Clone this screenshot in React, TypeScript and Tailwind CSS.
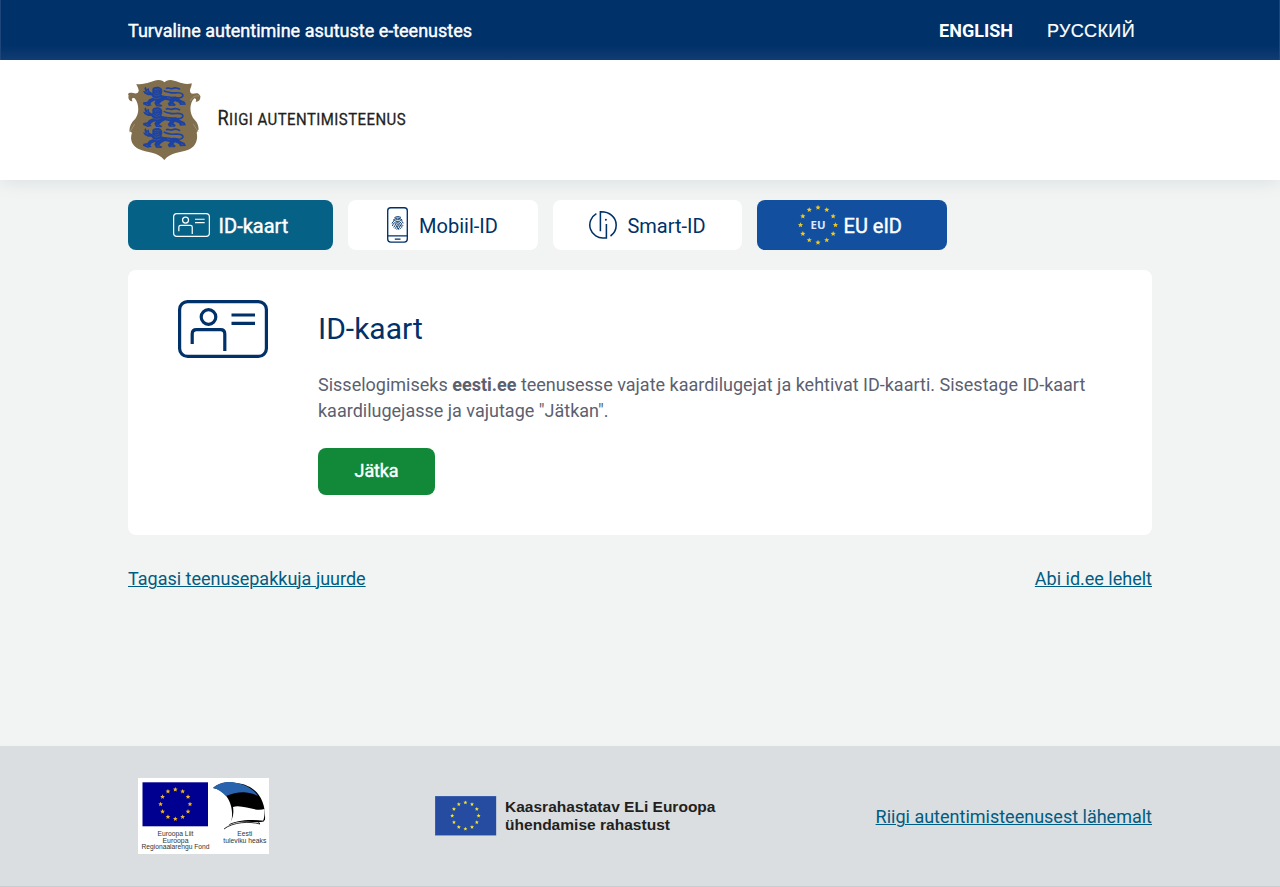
import React from "react";

function star(cx: number, cy: number, r: number) {
  return Array.from({ length: 10 }, (_, i) => {
    const a = (Math.PI * i) / 5 - Math.PI / 2;
    const q = i % 2 ? r * 0.45 : r;
    return `${(cx + q * Math.cos(a)).toFixed(2)},${(cy + q * Math.sin(a)).toFixed(2)}`;
  }).join(" ");
}

function Stars({ cx, cy, radius, size, fill }: { cx: number; cy: number; radius: number; size: number; fill: string }) {
  return (
    <g fill={fill}>
      {Array.from({ length: 12 }, (_, i) => {
        const a = (Math.PI * i) / 6;
        return <polygon key={i} points={star(cx + radius * Math.sin(a), cy - radius * Math.cos(a), size)} />;
      })}
    </g>
  );
}

function Lion({ y }: { y: number }) {
  return (
    <g transform={`translate(0 ${y})`}>
      <path fill="#1c43a3" d="M97 8 C99 0 119 -2 124 6 C129 12 127 20 124 26 C134 31 145 28 156 31 C168 29 176 34 181 40 L194 46 L198 55 L180 56 L177 49 L165 44 L160 49 L167 54 L165 59 L147 59 L143 52 L150 43 L135 40 L124 46 L118 53 L127 57 L124 61 L108 60 L103 50 L107 42 L95 47 L91 54 L96 57 L83 60 L69 54 L70 48 L82 46 L87 39 L99 34 L94 27 L84 27 L74 22 L69 14 L76 15 L73 6 L77 1 L80 9 L86 5 L88 15 L97 20 Z" />
      <path d="M165 33 C181 38 193 31 187 23 C180 15 164 22 151 19 C139 16 134 17 132 12 M138 7 C145 1 149 9 156 7 C162 4 170 3 180 9" fill="none" stroke="#1c43a3" strokeWidth="5" />
      <path d="M160 36 L175 42 L188 51 M147 38 L158 42 L153 55 M108 36 L120 40 L111 52" fill="none" stroke="#1c43a3" strokeWidth="7" />
      <g fill="none" stroke="#806e4c" strokeWidth="1.1">
        <path d="M103 8 L109 10 L115 7 L119 11 M104 14 L108 14 M112 14 L116 14 M105 19 L110 22 L117 19 M100 23 L109 29 L120 25 M92 32 L109 37 L122 34" />
        <path d="M76 16 L85 20 M82 11 L83 17 M112 54 L118 57 M78 52 L84 55 M153 54 L159 57 M184 49 L190 52 M141 33 L151 37" />
      </g>
    </g>
  );
}

function Shield() {
  return (
    <svg className="h-20 w-[73px] shrink-0" viewBox="24 30 219 240" aria-hidden="true">
      <path fill="#806e4c" d="M24 72 C32 61 51 80 56 63 C57 56 51 50 49 42 C75 46 98 31 115 30 C126 30 130 33 133 37 C137 33 142 30 151 30 C169 31 190 47 215 40 C216 51 207 57 211 67 C218 79 232 60 241 78 C242 88 237 97 227 95 C230 90 228 85 223 85 C208 98 206 132 225 151 C232 158 235 167 236 178 L230 188 C235 210 226 232 205 239 C181 248 153 245 133 270 C112 244 81 249 56 237 C35 226 29 207 36 188 L28 184 C28 169 34 156 46 146 C58 130 58 102 44 85 C35 82 34 89 38 94 C28 95 23 84 26 77 Z" />
      <path d="M238 78 C223 76 216 82 211 93 M29 187 L44 162 M235 186 L220 162" fill="none" stroke="#bbb09b" strokeWidth="1.5" />
      <Lion y={49} />
      <Lion y={111} />
      <Lion y={173} />
    </svg>
  );
}

function IdCard({ className, stroke }: { className: string; stroke: number }) {
  return (
    <svg className={className} viewBox="0 0 90 58" fill="none" stroke="currentColor" strokeWidth={stroke} aria-hidden="true">
      <rect x={stroke / 2} y={stroke / 2} width={90 - stroke} height={58 - stroke} rx="8" />
      <circle cx="30.5" cy="17" r="7.3" />
      <path d="M14.2 44 V34 Q14.2 29.7 18.5 29.7 H42.5 Q46.8 29.7 46.8 34 V51 M53.5 15 H77 M53.5 23.3 H77" />
    </svg>
  );
}

function Phone() {
  return (
    <svg className="h-9 w-[21px]" viewBox="0 0 21 36" fill="none" stroke="#003168" aria-hidden="true">
      <rect x="0.7" y="0.7" width="19.6" height="34.4" rx="3" strokeWidth="1.35" />
      <path d="M0.7 28.8 H20.3 M7.8 32 H13.5" strokeWidth="1.25" />
      <g strokeWidth="0.95">
        <path d="M7.5 10.5 Q10.7 8.5 14 10.4 M6 13.3 Q10.7 8.8 15.4 13.2 M5 16.6 C6.6 11.4 14.8 11.2 16.2 16.4 M5.4 19 C6.8 13.7 13.7 12.7 14.7 17.5 C15 19.4 15.8 19.3 16.2 18.5" />
        <path d="M6.7 20.5 C9 17.7 8 15.6 10.7 15.6 C13.7 15.6 12.8 20 15.2 20.6 M8 21.8 C10.3 19.5 9.2 17.1 10.7 17.1 C12.2 17.1 11.8 20.3 13.6 21.9 M10.8 18.6 Q10.8 21 9.8 22.6 M11.3 20.8 L11.9 22.8" />
      </g>
    </svg>
  );
}

function SmartId() {
  return (
    <svg className="h-7 w-7" viewBox="0 0 28 28" fill="none" stroke="#003168" strokeWidth="1.55" aria-hidden="true">
      <path d="M7.4 2.6 A13.1 13.1 0 0 0 15.3 27 H17.4 V13 M11.4 20.2 V0.8 C20.5 0.5 27.2 6.2 27.2 14 C27.2 18.3 25.2 22.4 21.5 25" />
      <circle cx="16.9" cy="8.7" r="1" fill="#003168" stroke="none" />
    </svg>
  );
}

function EuBadge() {
  return (
    <svg className="h-10 w-10" viewBox="0 0 40 40" aria-hidden="true">
      <Stars cx={20} cy={20} radius={17.5} size={2.7} fill="#f2c81e" />
      <text x="20" y="23.9" textAnchor="middle" textLength="15" lengthAdjust="spacingAndGlyphs" fill="#dce8ff" fontFamily="Open Sans, sans-serif" fontSize="11" fontWeight="700">EU</text>
    </svg>
  );
}

function FundLogo() {
  return (
    <svg className="h-[76px] w-[131px]" viewBox="0 0 131 76" aria-label="Euroopa Regionaalarengu Fond">
      <rect width="131" height="76" fill="#fff" />
      <rect x="4.5" y="4.3" width="65.5" height="44" fill="#000090" />
      <Stars cx={37.3} cy={26.2} radius={14.7} size={2.5} fill="#edb51f" />
      <path fill="#000" d="M75 10 C88 12 95 26 94 38 C94 44 91 48 86 51 C93 44 103 43 114 44 C119 44 124 45 127 42 C128 24 120 7 98 5 C89 3 81 5 75 10 Z" />
      <path fill="#2963ad" d="M75 10 C81 4 91 3 99 5 C109 7 116 12 120 18 C109 12 98 14 88 18 C84 14 80 11 75 10 Z" />
      <path fill="#fff" d="M95 29 C104 26 117 34 126.5 31 C127 36 126 41 125 43 C114 41 98 42 90 47 C95 42 96 35 95 29 Z" />
      <path fill="none" stroke="#000" strokeWidth="0.8" d="M86 51 C95 44 111 43 122 46 Q118 43 126 43" />
      <g fontFamily="Liberation Sans, Arial, sans-serif" fontSize="6.3" fill="#333" textAnchor="middle">
        <text x="37.5" y="57.5" textLength="36" lengthAdjust="spacingAndGlyphs">Euroopa Liit</text>
        <text x="37.5" y="64.5" textLength="26" lengthAdjust="spacingAndGlyphs">Euroopa</text>
        <text x="37.5" y="71.2" textLength="68" lengthAdjust="spacingAndGlyphs">Regionaalarengu Fond</text>
        <text x="106.8" y="57.5" textLength="15" lengthAdjust="spacingAndGlyphs">Eesti</text>
        <text x="106.8" y="64.5" textLength="43" lengthAdjust="spacingAndGlyphs">tuleviku heaks</text>
      </g>
    </svg>
  );
}

function CofinanceLogo() {
  return (
    <svg className="h-10 w-[290px]" viewBox="0 0 290 40" aria-label="Kaasrahastatav ELi Euroopa ühendamise rahastust">
      <rect width="61.3" height="39.6" fill="#6f87bf" />
      <rect x="0.3" y="0.3" width="60.7" height="38.8" fill="#264ca2" />
      <Stars cx={30.4} cy={19.7} radius={13.2} size={2.1} fill="#f3e62c" />
      <g fontFamily="Liberation Sans, Arial, sans-serif" fontSize="15.4" fontWeight="700" fill="#231f20">
        <text x="70" y="16" textLength="210.5" lengthAdjust="spacingAndGlyphs">Kaasrahastatav ELi Euroopa</text>
        <text x="70" y="34" textLength="165" lengthAdjust="spacingAndGlyphs">ühendamise rahastust</text>
      </g>
    </svg>
  );
}

const tab = "flex h-[50px] items-center justify-center rounded-lg text-[20px] leading-[50px]";
const link = "text-[18px] leading-[26px] text-[#005c82] underline decoration-1 underline-offset-1";
const sturdy = "[-webkit-text-stroke:0.4px_white]";

export default function App() {
  return (
    <div className="flex h-[887px] w-full flex-col overflow-hidden bg-[#f1f4f3] font-['Roboto','Liberation_Sans',sans-serif]">
      <div className="h-[60px] shrink-0 border-x border-[#1d477a] bg-[linear-gradient(to_bottom,#003168_0px,#003168_45px,#103c72_60px)] px-[127px]">
        <div className="flex h-full items-center justify-between text-[18px] text-white">
          <span className={sturdy}>Turvaline autentimine asutuste e-teenustes</span>
          <nav className="flex items-baseline gap-[34px] pr-[17px] pt-0.5">
            <a className="font-bold">ENGLISH</a>
            <a className="w-[88px] font-['Liberation_Sans',sans-serif] tracking-[0.36px] [-webkit-text-stroke:0.2px_white]">РУССКИЙ</a>
          </nav>
        </div>
      </div>
      <header className="relative h-[120px] shrink-0 bg-white px-32 pt-5 shadow-[0_0_20px_rgba(0,0,50,0.1)] [clip-path:inset(0_0_-30px_0)]">
        <div className="flex gap-4">
          <Shield />
          <svg className="mt-[20px] h-10 w-[240px]" viewBox="0 0 240 40" aria-label="Riigi autentimisteenus">
            <text x="0.5" y="24.8" textLength="188.5" lengthAdjust="spacingAndGlyphs" letterSpacing="0.5" fontFamily="Roboto, sans-serif" fontSize="16.5" fill="#231f20" stroke="#231f20" strokeWidth="0.3">
              <tspan fontSize="20">R</tspan>IIGI AUTENTIMISTEENUS
            </text>
          </svg>
        </div>
      </header>
      <main className="flex-1 px-32 pt-5">
        <nav className="flex gap-[15px]">
          <a className={`${tab} ${sturdy} w-[205px] gap-[9px] bg-[#066186] text-white`}>
            <IdCard className="h-6 w-[37px]" stroke={3} />
            <span className="pt-0.5">ID-kaart</span>
          </a>
          <a className={`${tab} w-[190px] gap-[11px] bg-white pr-px text-[#003168]`}>
            <Phone />
            <span className="pt-0.5">Mobiil-ID</span>
          </a>
          <a className={`${tab} w-[189px] gap-[10px] bg-white text-[#003168]`}>
            <SmartId />
            <span className="pt-0.5">Smart-ID</span>
          </a>
          <a className={`${tab} w-[190px] gap-[5.5px] bg-[#134f9f] pr-[4px] text-white`}>
            <EuBadge />
            <span className={`${sturdy} pt-0.5`}>EU eID</span>
          </a>
        </nav>
        <section className="mt-5 flex h-[265px] gap-[50px] rounded-lg bg-white px-[50px] pt-[30px]">
          <IdCard className="h-[58px] w-[90px] shrink-0 text-[#003168]" stroke={3.2} />
          <div className="pt-2">
            <h1 className="text-[30px] leading-[42px] text-[#003168]">ID-kaart</h1>
            <p className="mt-[22px] whitespace-nowrap text-[18px] leading-[26px] text-[#5c5f70]">
              Sisselogimiseks <b>eesti.ee</b> teenusesse vajate kaardilugejat ja kehtivat ID-kaarti. Sisestage ID-kaart
              <br />
              kaardilugejasse ja vajutage "Jätkan".
            </p>
            <button className={`${sturdy} mt-6 h-[47px] w-[117px] rounded-lg bg-[#118938] pb-0.5 text-[18px] tracking-[-0.15px] text-white`}>Jätka</button>
          </div>
        </section>
        <div className="mt-[31px] flex justify-between">
          <a className={link}>Tagasi teenusepakkuja juurde</a>
          <a className={link}>Abi id.ee lehelt</a>
        </div>
      </main>
      <footer className="flex h-[141px] shrink-0 border-b border-[#c9cdd0] bg-[#dadee1] pl-[138px] pr-32">
        <div className="w-[297px] pt-8"><FundLogo /></div>
        <div className="pt-[50px]"><CofinanceLogo /></div>
        <a className={`${link} ml-auto mt-[58px]`}>Riigi autentimisteenusest lähemalt</a>
      </footer>
    </div>
  );
}
